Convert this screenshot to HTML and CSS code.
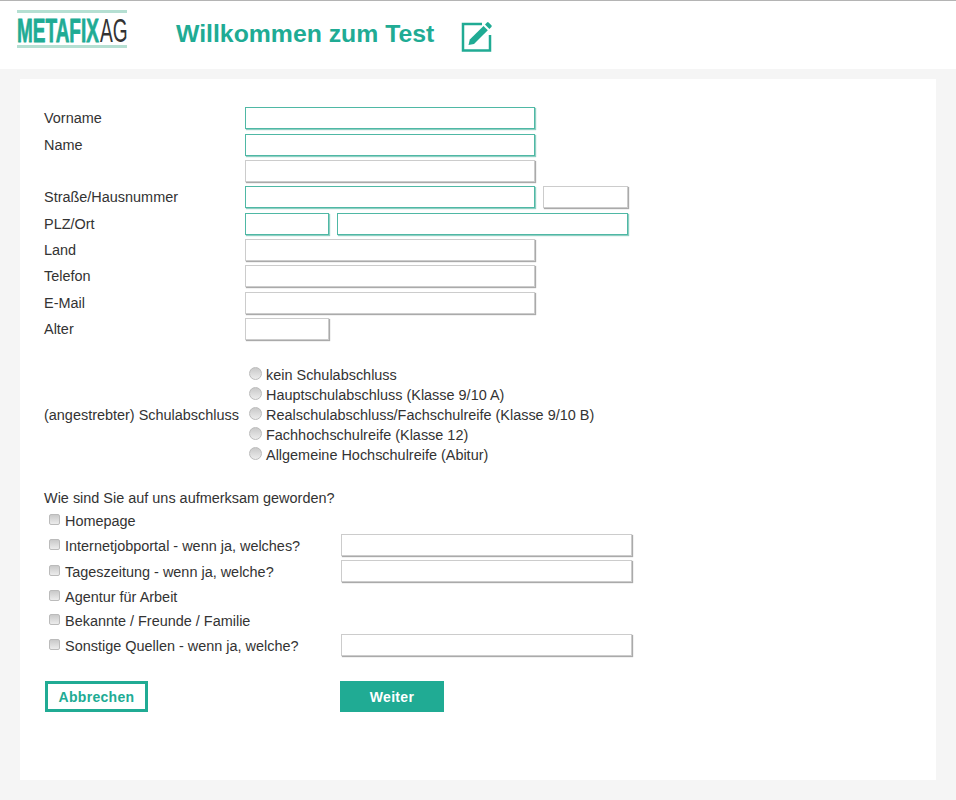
FILE: index.html
```html
<!DOCTYPE html>
<html lang="de">
<head>
  <meta charset="UTF-8" />
  <meta name="viewport" content="width=device-width, initial-scale=1" />
  <title>Willkommen zum Test</title>
  <link rel="stylesheet" href="styles.css">
</head>
<body>
  <header class="top-bar">
    <svg class="logo" width="112" height="40" viewBox="0 0 112 40">
      <rect x="0" y="0" width="110" height="3" fill="#b5dfd2" />
      <rect x="0" y="35" width="110" height="3" fill="#b5dfd2" />
      <text class="logo-name" transform="translate(0 31.500) scale(.575 1)">METAFIX</text>
      <text class="logo-ag" transform="translate(83 31.500) scale(.58 1)">AG</text>
    </svg>
    <h1>Willkommen zum Test</h1>
    <svg class="edit-icon" width="32" height="32" viewBox="0 0 32 32">
      <path d="M21 4H2v26.500h27V15" fill="none" stroke="#20ab94" stroke-width="2.500" />
      <path d="M7.500 25l1.300-5.500L22.500 6l4.300 4.300L13 24z" fill="#20ab94" />
      <path d="M24 4.500l2-2q.8-.8 1.600 0l2.800 2.800q.8.800 0 1.600l-2 2z" fill="#20ab94" />
    </svg>
  </header>

  <main class="card">
    <form>
      <div class="address-grid">
        <label>Vorname</label>
        <div class="field-row"><input class="wide required" type="text"></div>
        <label>Name</label>
        <div class="field-row"><input class="wide required" type="text"></div>
        <label></label>
        <div class="field-row"><input class="wide" type="text"></div>
        <label>Straße/Hausnummer</label>
        <div class="field-row"><input class="wide required" type="text"><input class="house" type="text"></div>
        <label>PLZ/Ort</label>
        <div class="field-row"><input class="short required" type="text"><input class="city required" type="text"></div>
        <label>Land</label>
        <div class="field-row"><input class="wide" type="text"></div>
        <label>Telefon</label>
        <div class="field-row"><input class="wide" type="text"></div>
        <label>E-Mail</label>
        <div class="field-row"><input class="wide" type="text"></div>
        <label>Alter</label>
        <div class="field-row"><input class="short" type="text"></div>
      </div>

      <div class="school">
        <div class="school-label">(angestrebter) Schulabschluss</div>
        <div class="school-options">
          <label><input type="radio" name="school"> kein Schulabschluss</label>
          <label><input type="radio" name="school"> Hauptschulabschluss (Klasse 9/10 A)</label>
          <label><input type="radio" name="school"> Realschulabschluss/Fachschulreife (Klasse 9/10 B)</label>
          <label><input type="radio" name="school"> Fachhochschulreife (Klasse 12)</label>
          <label><input type="radio" name="school"> Allgemeine Hochschulreife (Abitur)</label>
        </div>
      </div>

      <p class="question">Wie sind Sie auf uns aufmerksam geworden?</p>
      <div class="sources">
        <label class="source short-row"><input type="checkbox"> Homepage</label>
        <label class="source"><input type="checkbox"> Internetjobportal - wenn ja, welches?</label>
        <input class="source-input" type="text">
        <label class="source"><input type="checkbox"> Tageszeitung - wenn ja, welche?</label>
        <input class="source-input" type="text">
        <label class="source short-row"><input type="checkbox"> Agentur für Arbeit</label>
        <label class="source short-row"><input type="checkbox"> Bekannte / Freunde / Familie</label>
        <label class="source"><input type="checkbox"> Sonstige Quellen - wenn ja, welche?</label>
        <input class="source-input" type="text">
      </div>

      <div class="buttons">
        <button class="btn-cancel" type="button">Abbrechen</button>
        <button class="btn-next" type="button">Weiter</button>
      </div>
    </form>
  </main>
</body>
</html>
```

FILE: styles.css
```css
* {
  box-sizing: border-box;
}

body {
  margin: 0;
  background: #f5f5f5;
  color: #333;
  font-family: "Liberation Sans", Arial, sans-serif;
  font-size: 14.45px;
}

.top-bar {
  height: 69px;
  background: #fff;
  border-top: 1px solid #b4b4b4;
  display: flex;
  align-items: flex-start;
  padding-left: 17px;
}

.logo {
  margin-top: 9px;
  flex: none;
}

.logo-name {
  font-family: "Liberation Sans", Arial, sans-serif;
  font-weight: bold;
  font-size: 33px;
  fill: #20ab94;
  stroke: #20ab94;
  stroke-width: 0.8px;
}

.logo-ag {
  font-family: "Liberation Sans", Arial, sans-serif;
  font-size: 33px;
  fill: #333;
}

h1 {
  margin: 18px 27px 0 47px;
  color: #20ab94;
  font-size: 24.8px;
  line-height: 30px;
  white-space: nowrap;
}

.edit-icon {
  margin-top: 19px;
  flex: none;
}

.card {
  width: 916px;
  height: 701px;
  margin: 10px 0 0 20px;
  padding: 28.45px 24px;
  background: #fff;
}

input[type="text"] {
  display: block;
  height: 22px;
  padding: 0 4px;
  background: #fff;
  border: 1px solid #ccc;
  box-shadow: 1px 1px 1px #aaa;
  outline: none;
}

input.required {
  border-color: #4fb8a5;
  box-shadow: 1px 1px 1px #8fcfc2;
}

.address-grid {
  display: grid;
  grid-template-columns: 201px 1fr;
  grid-auto-rows: 22px;
  row-gap: 4.3px;
  align-items: center;
}

.field-row {
  display: flex;
  gap: 8px;
}

.wide {
  width: 290px;
}

.short {
  width: 84px;
}

.house {
  width: 85px;
}

.city {
  width: 291px;
}

.school {
  display: flex;
  align-items: center;
  margin-top: 25.4px;
}

.school-label {
  width: 201px;
  flex: none;
  white-space: nowrap;
}

.school-options {
  display: flex;
  flex-direction: column;
  padding-left: 4px;
}

.school-options label {
  display: flex;
  align-items: center;
  height: 20px;
  gap: 4px;
  white-space: nowrap;
}

input[type="radio"],
input[type="checkbox"] {
  appearance: none;
  flex: none;
  margin: 0 0 3px;
  background: linear-gradient(#c9c9c9, #ececec);
  border: 1px solid #bbb;
}

input[type="radio"] {
  width: 13px;
  height: 13px;
  border-radius: 50%;
}

input[type="checkbox"] {
  width: 11px;
  height: 11px;
  border-radius: 2px;
}

.question {
  margin: 23px 0 0;
  line-height: 20px;
}

.sources {
  display: grid;
  grid-template-columns: 297px 291px;
  margin-top: 1px;
  align-items: center;
}

.source {
  display: flex;
  align-items: center;
  gap: 5px;
  padding-left: 5px;
  height: 26px;
  white-space: nowrap;
}

.short-row {
  grid-column: 1 / -1;
  height: 24px;
}

.source-input {
  width: 291px;
  align-self: start;
  margin-top: 1px;
}

.buttons {
  display: flex;
  margin-top: 22px;
  padding-left: 1px;
}

.buttons button {
  height: 31px;
  font-family: inherit;
  font-size: 14px;
  font-weight: bold;
  letter-spacing: 0.3px;
}

.btn-cancel {
  width: 103px;
  margin-right: 192px;
  background: #fff;
  color: #20ab94;
  border: 3px solid #20ab94;
}

.btn-next {
  width: 104px;
  background: #20ab94;
  color: #fff;
  border: none;
}
```
